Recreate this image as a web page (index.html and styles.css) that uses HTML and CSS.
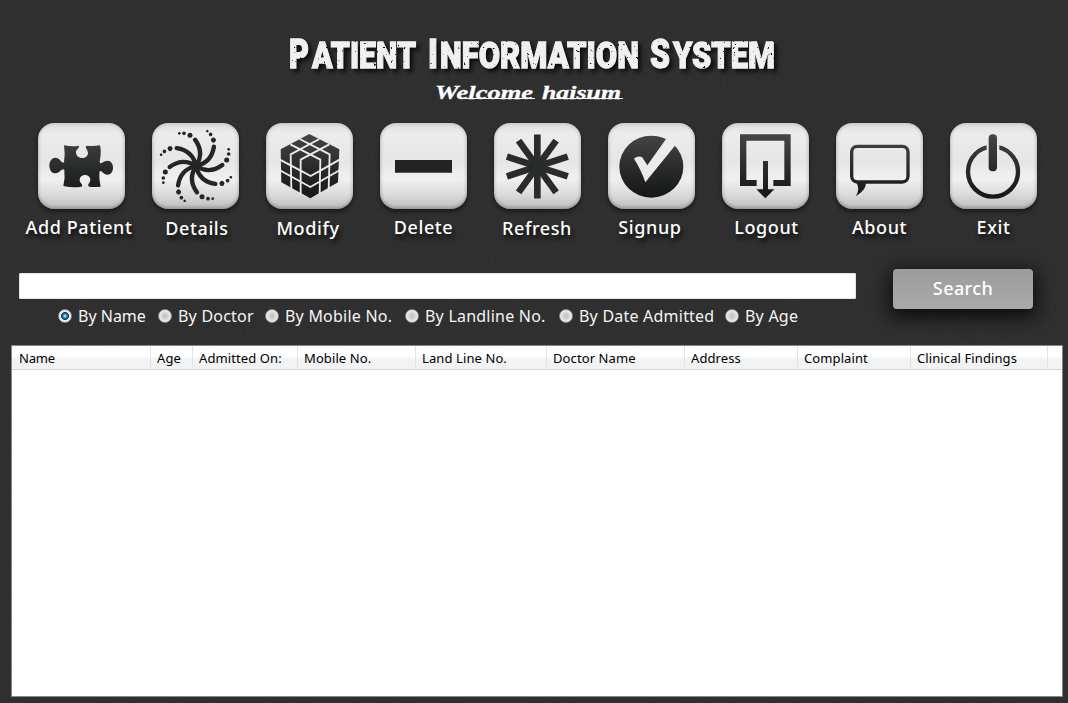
FILE: index.html
```
<!DOCTYPE html>
<html lang="en">
<head>
<meta charset="utf-8">
<title>Patient Information System</title>
<link rel="stylesheet" href="styles.css">
</head>
<body>
<svg class="texture" width="1068" height="703" aria-hidden="true">
  <filter id="grain" x="0" y="0" width="100%" height="100%">
    <feTurbulence type="fractalNoise" baseFrequency="0.35" numOctaves="3" seed="4"/>
    <feColorMatrix type="saturate" values="0"/>
  </filter>
  <rect width="1068" height="703" filter="url(#grain)"/>
</svg>
<svg width="0" height="0" class="defs" aria-hidden="true">
  <defs>
    <linearGradient id="ink" gradientUnits="userSpaceOnUse" x1="0" y1="70" x2="0" y2="270">
      <stop offset="0" stop-color="#454646"/>
      <stop offset=".5" stop-color="#2a2b2b"/>
      <stop offset="1" stop-color="#141515"/>
    </linearGradient>
    <filter id="worn" x="-2%" y="-10%" width="104%" height="130%">
      <feTurbulence type="fractalNoise" baseFrequency="0.3" numOctaves="2" seed="11" result="n"/>
      <feColorMatrix in="n" type="matrix" values="0 0 0 0 0  0 0 0 0 0  0 0 0 0 0  -14 0 0 0 11.1" result="m"/>
      <feComposite in="SourceGraphic" in2="m" operator="in"/>
    </filter>
  </defs>
</svg>

<div class="app">
<header>
  <svg width="1068" height="123">
    <g class="title-shadow">
      <g class="title" filter="url(#worn)">
        <text class="big" x="289" y="68" textLength="20" lengthAdjust="spacingAndGlyphs">P</text>
        <text x="312" y="68" textLength="104" lengthAdjust="spacingAndGlyphs">ATIENT</text>
        <text class="big" x="428" y="68" textLength="10" lengthAdjust="spacingAndGlyphs">I</text>
        <text x="440" y="68" textLength="199" lengthAdjust="spacingAndGlyphs">NFORMATION</text>
        <text class="big" x="650" y="68" textLength="20" lengthAdjust="spacingAndGlyphs">S</text>
        <text x="673" y="68" textLength="102" lengthAdjust="spacingAndGlyphs">YSTEM</text>
      </g>
    </g>
    <text class="welcome" x="435" y="99" textLength="98" lengthAdjust="spacingAndGlyphs">Welcome</text>
    <text class="welcome" x="542" y="99" textLength="79" lengthAdjust="spacingAndGlyphs">haisum</text>
    <path class="stroke-line" d="M461 98.5H535M552 98.5H623"/>
  </svg>
</header>

<nav class="toolbar">
  <a class="tool add"><svg class="tile" viewBox="84 39 261 258"><path d="M162 106Q190 111 205 107C213 112 196 118 198 128C200 149 234 149 234 128C234 118 222 112 230 107Q250 110 270 106Q275 125 269 155C272 168 278 152 292 152C315 152 315 194 292 194C280 194 274 178 269 184Q266 200 272 230Q250 232 238 230C229 226 241 218 241 210C241 190 209 190 209 210C209 220 222 224 214 230Q190 234 160 228Q166 205 163 180C156 172 150 190 136 190C112 190 112 143 136 143C150 143 155 162 162 157Q166 130 162 106Z"/></svg><span>Add Patient</span></a>
  <a class="tool details"><svg class="tile" viewBox="426 39 261 258">
    <defs><g id="arm"><path class="arm" d="M0 0Q26 -40 -3 -79"/><circle cx="-18" cy="-92" r="7.500"/><circle cx="-36" cy="-98" r="5.500"/><circle cx="-50" cy="-98" r="4"/></g></defs>
    <g transform="translate(558 168)"><circle r="17"/><use href="#arm"/><use href="#arm" transform="rotate(45)"/><use href="#arm" transform="rotate(90)"/><use href="#arm" transform="rotate(135)"/><use href="#arm" transform="rotate(180)"/><use href="#arm" transform="rotate(225)"/><use href="#arm" transform="rotate(270)"/><use href="#arm" transform="rotate(315)"/></g></svg><span>Details</span></a>
  <a class="tool modify"><svg class="tile" viewBox="48 39 261 258"><path d="M178 72L268 118L264 217L181 265L94 217L92 118Z"/><path class="cut" d="M121 103L211 149L209 252M149 87L239 133L236 236M238 103L152 149L152 252M208 87L122 133L124 236M88 148L152 182L182 198L211 182L270 148M88 180L181 231L270 180"/></svg><span>Modify</span></a>
  <a class="tool delete"><svg class="tile" viewBox="390 39 261 258"><path d="M435 150H606V188H435Z"/></svg><span>Delete</span></a>
  <a class="tool refresh"><svg class="tile" viewBox="42 39 261 258">
    <defs><path id="bar" d="M-10 -96H10V96H-10Z"/></defs>
    <g transform="translate(172 169.500)"><use href="#bar"/><use href="#bar" transform="rotate(36)"/><use href="#bar" transform="rotate(72)"/><use href="#bar" transform="rotate(108)"/><use href="#bar" transform="rotate(144)"/></g></svg><span>Refresh</span></a>
  <a class="tool signup"><svg class="tile" viewBox="384 39 261 258"><ellipse cx="514" cy="170" rx="96" ry="93"/><path class="paper" d="M462 146Q472 136 486 141Q492 150 502 166L566 76L592 98L496 217Q484 180 462 146Z"/></svg><span>Signup</span></a>
  <a class="tool logout"><svg class="tile" viewBox="36 39 261 258"><path d="M90 73H242V228H190V210H223V92H109V210H140V228H90Z"/><path d="M159 153H174V238H193L166 265L139 238H159Z"/></svg><span>Logout</span></a>
  <a class="tool about"><svg class="tile" viewBox="378 39 261 258"><rect class="line" x="425" y="109" width="169" height="107" rx="17"/><path d="M438 216L468 220Q467 242 437 259Q452 236 438 216Z"/></svg><span>About</span></a>
  <a class="tool exit"><svg class="tile" viewBox="90 39 261 258"><circle class="ring" cx="219" cy="185" r="75"/><path class="paper" d="M200 98H238V130H200Z"/><rect x="206" y="73" width="25" height="111" rx="12"/></svg><span>Exit</span></a>
</nav>

<section class="search">
  <div class="query">
    <div class="field"></div>
    <div class="radios">
      <span class="radio on">By Name</span><span class="radio">By Doctor</span><span class="radio">By Mobile No.</span><span class="radio">By Landline No.</span><span class="radio">By Date Admitted</span><span class="radio">By Age</span>
    </div>
  </div>
  <button class="go">Search</button>
</section>

<main class="list">
  <div class="head"><span>Name</span><span>Age</span><span>Admitted On:</span><span>Mobile No.</span><span>Land Line No.</span><span>Doctor Name</span><span>Address</span><span>Complaint</span><span>Clinical Findings</span><span></span></div>
</main>
</div>
</body>
</html>
```
FILE: styles.css
```
* { box-sizing: border-box; }
body {
  margin: 0;
  width: 1068px;
  height: 703px;
  overflow: hidden;
  background: #2d2d2d;
  font-family: "Noto Sans", "Open Sans", sans-serif;
}
.texture { position: absolute; inset: 0; opacity: .035; }
.defs { position: absolute; }
.app { position: relative; height: 703px; display: flex; flex-direction: column; }
header { height: 123px; flex: none; }
header svg { display: block; }
.title { fill: #f0f0f0; stroke: #f0f0f0; stroke-width: 1.3; font: 900 37px Roboto, "Liberation Sans", sans-serif; }
.title .big { font-size: 40px; }
.title-shadow { filter: drop-shadow(3px 3px 2px rgba(0,0,0,.75)); }
.welcome { fill: #fff; stroke: #fff; stroke-width: .3; font: italic bold 18px "Liberation Serif", serif; }
.stroke-line { stroke: #fff; stroke-width: 1; }

.toolbar {
  flex: none;
  height: 146px;
  display: grid;
  grid-template-columns: repeat(9, 87px);
  column-gap: 27px;
  padding-left: 38px;
}
.tool { display: flex; flex-direction: column; align-items: center; }
.tile {
  flex: none;
  width: 87px;
  height: 86px;
  border-radius: 16px;
  background: linear-gradient(#dedede, #ececec 12%, #e6e6e6 45%, #f0f0f0 65%, #dcdcdc 82%, #bdbdbd);
  box-shadow: inset 0 0 4px rgba(0,0,0,.22), inset 0 -2px 3px rgba(0,0,0,.12), 0 3px 4px rgba(0,0,0,.45);
  fill: url(#ink);
}
.tile .arm { fill: none; stroke: #242525; stroke-width: 13; stroke-linecap: round; }
.details .tile { fill: #242525; }
.refresh .tile { fill: #2a2b2b; }
.tile .cut { fill: none; stroke: #ebebeb; stroke-width: 5.5; }
.tile .paper { fill: #ebebeb; }
.tile .line { fill: none; stroke: url(#ink); stroke-width: 10; }
.tile .ring { fill: none; stroke: url(#ink); stroke-width: 13; }
.delete .tile { fill: #222323; }
.tool span {
  margin-top: 6px;
  font-size: 18px;
  font-weight: 500;
  line-height: 24px;
  letter-spacing: .6px;
  white-space: nowrap;
  color: #fff;
  text-shadow: 2px 4px 5px rgba(0,0,0,.8);
}
.add span { margin-left: -5px; }
.details span { margin: 7px 0 0 3px; }
.modify span { margin: 7px 0 0 -3px; }
.refresh span { margin: 7px 0 0 -1px; }
.signup span { margin-left: -3px; }
.logout span { margin-left: 2px; }

.search { flex: none; height: 76px; display: flex; padding-left: 19px; gap: 37px; }
.query { width: 837px; padding-top: 4px; }
.field { height: 26px; background: #fff; border: 1px solid #e3e3e3; border-radius: 1px; }
.radios {
  display: grid;
  grid-template-columns: 100px 107px 140px 154px 166px auto;
  padding: 5px 0 0 39px;
  color: #f5f5f5;
  font-size: 16px;
  line-height: 24px;
  letter-spacing: .22px;
  white-space: nowrap;
}
.radio { display: flex; align-items: center; gap: 6px; }
.radio::before {
  content: "";
  width: 12px;
  height: 12px;
  border-radius: 50%;
  border: 1px solid #888;
  background: radial-gradient(circle, #c8c8c8 20%, #e4e4e4 55%, #fff 85%);
}
.radio.on { letter-spacing: 0; }
.radio.on::before {
  background: radial-gradient(circle at 50% 50%, #8fdcf7 0 10%, #2b7ba6 24%, #123a56 43%, #dfe6ea 50%, #fff 75%);
}
.go {
  width: 140px;
  height: 40px;
  padding: 0 0 2px;
  border: 0;
  border-radius: 4px;
  background: linear-gradient(#9c9c9c, #a9a9a9);
  box-shadow: 0 5px 18px 4px rgba(0,0,0,.7);
  color: #fff;
  font: 500 18px/38px "Noto Sans", sans-serif;
  letter-spacing: .4px;
}
.list {
  flex: none;
  width: 1052px;
  height: 352px;
  margin-left: 11px;
  background: #fff;
  border: 1px solid #828790;
}
.head {
  display: grid;
  grid-template-columns: 139px 42px 105px 118px 131px 138px 113px 113px 137px auto;
  height: 24px;
  border-bottom: 1px solid #d5d5d5;
  background: linear-gradient(#fff 45%, #f2f3f5 55%, #f1f2f4);
  font-size: 13px;
  line-height: 24px;
  letter-spacing: .1px;
  white-space: nowrap;
  color: #000;
}
.head span { padding-left: 6px; border-right: 1px solid #e0e3e8; }
.head span:first-child { padding-left: 7px; letter-spacing: -.2px; }
.head span:last-child { border: 0; }
```
